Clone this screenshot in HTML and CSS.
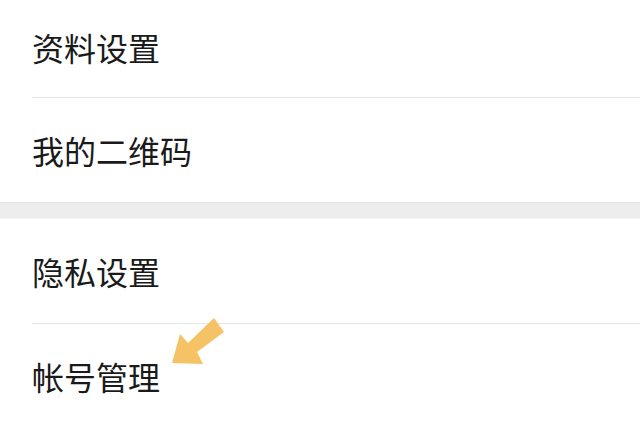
FILE: index.html
```html
<!DOCTYPE html>
<html lang="zh-CN">
<head>
<meta charset="utf-8">
<link rel="stylesheet" href="styles.css">
</head>
<body>
<div class="page">
  <div class="group">
    <div class="row first">资料设置</div>
    <div class="divider"></div>
    <div class="row">我的二维码</div>
  </div>
  <div class="band"></div>
  <div class="group">
    <div class="row">隐私设置</div>
    <div class="divider"></div>
    <div class="row">帐号管理</div>
  </div>
  <svg class="arrow" width="640" height="427" viewBox="0 0 640 427">
    <polygon points="214,318 224,332 197,352 203,364 172,363 180,334 188,343" fill="#f6c266"/>
  </svg>
</div>
</body>
</html>
```
FILE: styles.css
```css
html, body {
  margin: 0;
  padding: 0;
  background: #ffffff;
}
.page {
  position: relative;
  width: 640px;
  height: 427px;
  overflow: hidden;
  font-family: "Noto Sans CJK SC", "Noto Sans", sans-serif;
  color: #1a1a1a;
}
.group {
  display: flex;
  flex-direction: column;
  background: #ffffff;
}
.row {
  height: 104px;
  display: flex;
  align-items: center;
  padding-left: 32px;
  font-size: 32px;
  line-height: 1;
}
.row.first {
  height: 97px;
  padding-bottom: 4px;
  box-sizing: border-box;
}
.divider {
  height: 1px;
  margin-left: 32px;
  background: #e6e6e6;
}
.band {
  height: 17px;
  background: #ededed;
  border-top: 1px solid #e4e4e4;
  border-bottom: 1px solid #f3f3f3;
  box-sizing: border-box;
}
.arrow {
  position: absolute;
  left: 0;
  top: 0;
  pointer-events: none;
}
```
